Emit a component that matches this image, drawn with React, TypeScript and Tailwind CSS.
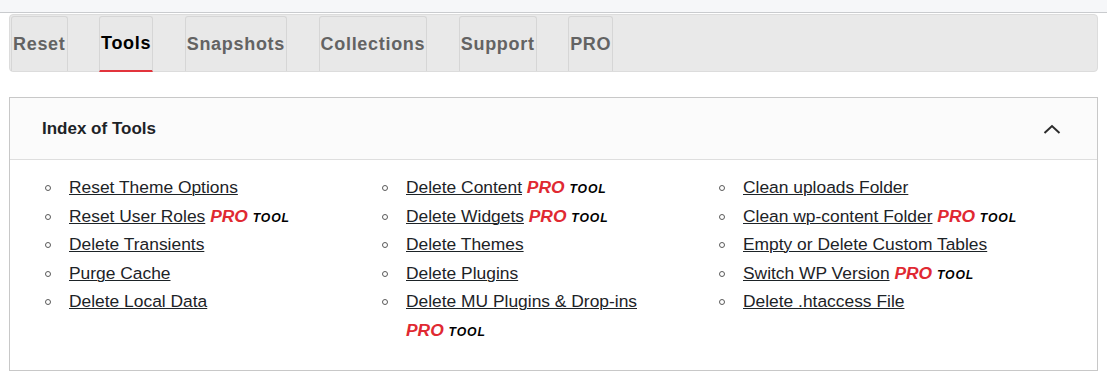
import React from 'react';

/* Tools tab – Index of Tools panel */

type Tool = { label: string; pro?: boolean };

const columns: Tool[][] = [
  [
    { label: 'Reset Theme Options' },
    { label: 'Reset User Roles', pro: true },
    { label: 'Delete Transients' },
    { label: 'Purge Cache' },
    { label: 'Delete Local Data' },
  ],
  [
    { label: 'Delete Content', pro: true },
    { label: 'Delete Widgets', pro: true },
    { label: 'Delete Themes' },
    { label: 'Delete Plugins' },
    { label: 'Delete MU Plugins & Drop-ins', pro: true },
  ],
  [
    { label: 'Clean uploads Folder' },
    { label: 'Clean wp-content Folder', pro: true },
    { label: 'Empty or Delete Custom Tables' },
    { label: 'Switch WP Version', pro: true },
    { label: 'Delete .htaccess File' },
  ],
];

const tabs = ['Reset', 'Tools', 'Snapshots', 'Collections', 'Support', 'PRO'];

function ProBadge() {
  return (
    <span className="whitespace-nowrap italic font-bold leading-none">
      <span className="text-[#e02932]">PRO</span>{' '}
      <span className="text-[12.2px] leading-none tracking-[0.9px] text-black">TOOL</span>
    </span>
  );
}

function ToolItem({ tool }: { tool: Tool }) {
  return (
    <li className="flex pr-[14px]">
      <span className="w-[24px] shrink-0 pt-[12px]">
        <span className="block h-[6px] w-[6px] rounded-full border border-[#5a5a5a]" />
      </span>
      <div>
        <a href="#" className="text-[#1d2327] underline decoration-1">
          {tool.label}
        </a>
        {tool.pro && (
          <>
            {' '}
            <ProBadge />
          </>
        )}
      </div>
    </li>
  );
}

export default function App() {
  return (
    <div className="min-h-[381px] bg-white font-['Liberation_Sans',Arial,sans-serif]">
      {/* admin top strip */}
      <div className="h-[13px] border-b border-[#c9cbce] bg-[#f6f7f9]" />

      <div className="px-[9px]">
        {/* ── Tab bar ──── */}
        <nav className="mt-[1px] flex h-[58px] items-end gap-[31.5px] rounded-[4px] border border-[#dcdcdc] bg-[#e9e9e9] pl-[1px]">
          {tabs.map((t) =>
            t === 'Tools' ? (
              <div
                key={t}
                className="-mb-px flex h-[56px] items-center rounded-t-[3px] border border-b-2 border-[#d6d6d6] border-b-[#e2343c] bg-[#e8e8e8] px-[1px] text-[18px] font-bold tracking-[0.7px] text-black"
              >
                {t}
              </div>
            ) : (
              <div
                key={t}
                className="flex h-[55px] items-center rounded-t-[3px] border border-b-0 border-[#d6d6d6] bg-[#e8e8e8] px-[1px] text-[18px] font-bold tracking-[0.7px] text-[#636363]"
              >
                {t}
              </div>
            )
          )}
        </nav>

        {/* ── Index of Tools card ──── */}
        <section className="mt-[25px] border border-[#c8c8c8] bg-white">
          <header className="flex h-[62px] items-center justify-between border-b border-[#dedede] bg-[#fbfbfb] pl-[32px] pr-[36px]">
            <h2 className="text-[17px] font-bold text-[#1d2327]">Index of Tools</h2>
            <svg width="18" height="10" viewBox="0 0 18 10" fill="none" aria-hidden="true">
              <path d="M1.5 9L9 2L16.5 9" stroke="#2c2c2c" strokeWidth="2" />
            </svg>
          </header>

          <div className="grid grid-cols-3 pb-[25px] pl-[35px] pr-[41px] pt-[13px] text-[17.4px] leading-[28.6px] text-[#1d2327]">
            {columns.map((col, i) => (
              <ul key={i}>
                {col.map((tool) => (
                  <ToolItem key={tool.label} tool={tool} />
                ))}
              </ul>
            ))}
          </div>
        </section>
      </div>
    </div>
  );
}
